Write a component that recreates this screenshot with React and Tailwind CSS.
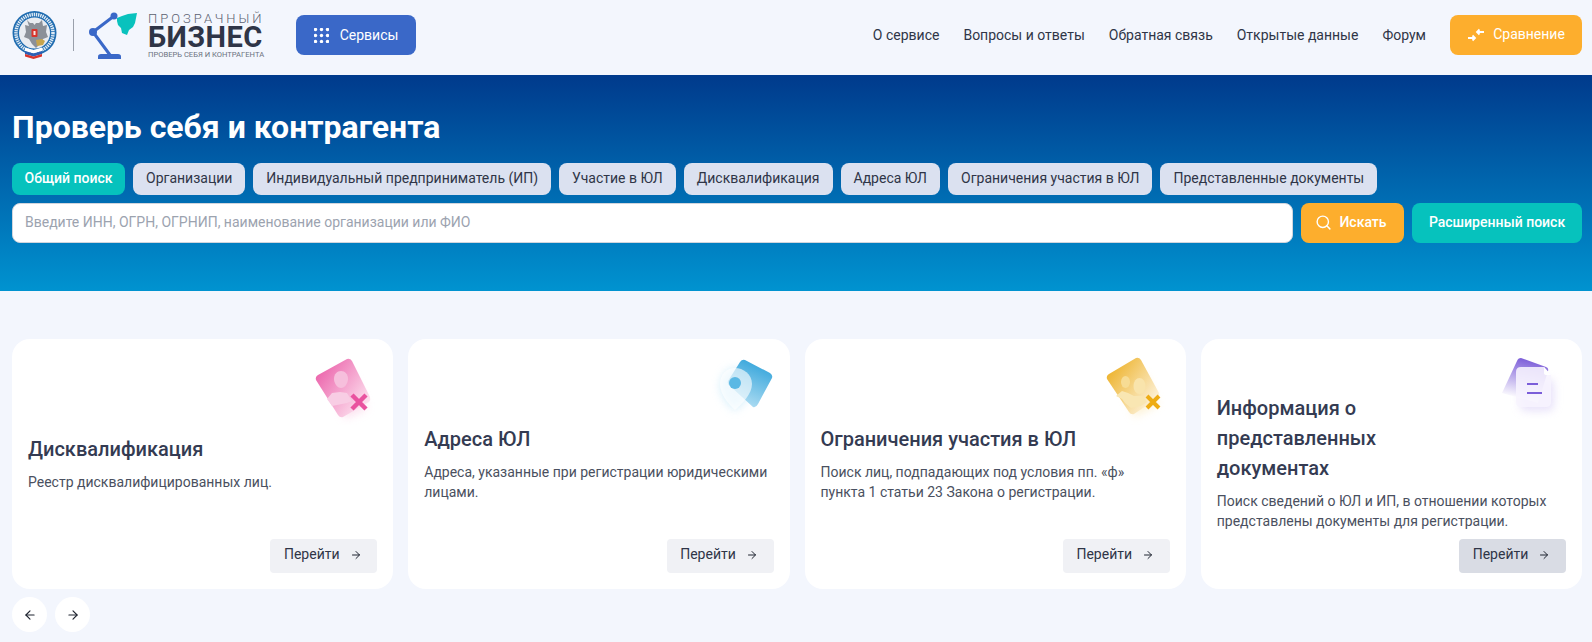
import React from "react";
import { ArrowLeft, ArrowRight, Search } from "lucide-react";

const tabs = [
  ["Общий поиск", true],
  ["Организации"],
  ["Индивидуальный предприниматель (ИП)"],
  ["Участие в ЮЛ"],
  ["Дисквалификация"],
  ["Адреса ЮЛ"],
  ["Ограничения участия в ЮЛ"],
  ["Представленные документы"],
];

function Emblem() {
  return (
    <svg width="46" height="50" viewBox="0 0 46 50">
      <circle cx="22.5" cy="23" r="22" fill="#1f6cb0" />
      <circle cx="22.5" cy="23" r="18.5" fill="none" stroke="#dfeaf4" strokeWidth="3.5" strokeDasharray="1.4 0.8" />
      <circle cx="22.5" cy="23" r="15.5" fill="#e9ecf1" />
      <path d="M15 10l3 3 3 0 1.500 2 1.500-2 3 0 3-3 1 6 4-1-1 7 2 5-5 2-3 5-4 4-4-4-3-5-5-2 2-5-1-7 4 1z" fill="#8b9098" />
      <rect x="19.500" y="19" width="6" height="8" rx="1" fill="#d8342c" />
      <path d="M21.500 21h2v4h-2z" fill="#f6e6e4" />
      <path d="M24 30l6-1 3 2-2 4-6 1z" fill="#c6a44c" />
      <path d="M13 37.500l8.500 2.500 8.500-2.500v3.500l-8.500 2.500-8.500-2.500z" fill="#fff" />
      <path d="M13 41l8.500 2.500 8.500-2.500v3l-8.500 2.500-8.500-2.500z" fill="#2d5fb4" />
      <path d="M13 44l8.500 2.500 8.500-2.500v2.500l-8.500 2.500-8.500-2.500z" fill="#d8342c" />
    </svg>
  );
}

function Lamp() {
  return (
    <svg width="50" height="50" viewBox="0 0 50 50">
      <path d="M9 49v-2.500q0-2.500 3-2.500h17q3 0 3 2.500v2.500z" fill="#3a68c8" />
      <path d="M4 22L21 45M4 22L25 6" stroke="#3a68c8" strokeWidth="3" fill="none" />
      <circle cx="4" cy="22" r="4" fill="#3a68c8" />
      <circle cx="25" cy="6" r="3.500" fill="#3a68c8" />
      <path d="M28 8l5-2 6-2 9-1-2 10-2 4-4 3-2 5-5-2-1-5-3-3-1-4z" fill="#09c2bd" />
    </svg>
  );
}

function Glow({ id }) {
  return (
    <filter id={id} x="-50%" y="-50%" width="200%" height="200%">
      <feGaussianBlur stdDeviation="4" />
    </filter>
  );
}

function PinkIcon() {
  return (
    <svg width="66" height="72" viewBox="0 0 66 72">
      <defs>
        <linearGradient id="p1" x1="0" y1="0.1" x2="1" y2="0.9">
          <stop offset="0" stopColor="#ea5aa6" />
          <stop offset="1" stopColor="#fff0f7" />
        </linearGradient>
        <Glow id="p2" />
      </defs>
      <path d="M20 30L42 22 56 56 34 66z" fill="#f9c6e0" opacity="0.5" filter="url(#p2)" />
      <path d="M7 22L36 6q3-1 5 2l18 36q1 3-1 5L32 64q-3 1-5-2L5 27q-1-3 2-5z" fill="url(#p1)" />
      <path d="M23 26c0-5 3-8 7-8s7 3 7 8c0 4-3 9-7 9s-7-5-7-9z" fill="#f6bfdc" />
      <path d="M16 46l5-6 8-1 7 1 3 5 2 3-5 2-15 3z" fill="#f8cde4" />
      <path d="M41 42l14 14M55 42L41 56" stroke="#e9529f" strokeWidth="4.500" />
    </svg>
  );
}

function BlueIcon() {
  return (
    <svg width="66" height="66" viewBox="0 0 66 66">
      <defs>
        <linearGradient id="b1" x1="0.7" y1="0" x2="0.3" y2="1">
          <stop offset="0" stopColor="#31a3da" />
          <stop offset="1" stopColor="#b6e0f4" />
        </linearGradient>
        <Glow id="b2" />
      </defs>
      <path d="M12 34c0-11 7-19 15-19s17 8 17 19c0 9-10 18-17 24-7-6-15-15-15-24z" fill="#bfe6f8" opacity="0.6" filter="url(#b2)" />
      <path d="M32 9q2-3 5-2l25 13q3 2 2 5L50 51q-2 4-5 3L22 33q-3-2-2-5z" fill="url(#b1)" />
      <path d="M12 31c0-10 7-16 15-16s17 6 17 16c0 10-10 20-17 26-7-6-15-16-15-26z" fill="#fff" opacity="0.62" />
      <circle cx="27" cy="30" r="6" fill="#5ab8e4" />
    </svg>
  );
}

function YellowIcon() {
  return (
    <svg width="66" height="72" viewBox="0 0 66 72">
      <defs>
        <linearGradient id="y1" x1="0" y1="0.1" x2="1" y2="0.9">
          <stop offset="0" stopColor="#ecad1c" />
          <stop offset="1" stopColor="#fffaf0" />
        </linearGradient>
        <Glow id="y2" />
      </defs>
      <path d="M18 30L42 22 54 52 30 64z" fill="#fbe6ae" opacity="0.5" filter="url(#y2)" />
      <path d="M5 21L32 5q3-1 5 2l18 33q1 3-1 5L30 61q-3 1-5-2L3 26q-1-3 2-5z" fill="url(#y1)" />
      <ellipse cx="21.500" cy="29" rx="4.500" ry="6" fill="#f7dc94" />
      <ellipse cx="35.500" cy="33" rx="6" ry="8" fill="#f9e4ac" />
      <path d="M12 43l6-5 6 2 6 3 8 0 5 6-6 4-10 2-6-5-3-4z" fill="#f9e6b2" />
      <path d="M43 43l12 12M55 43L43 55" stroke="#eeac14" strokeWidth="4" />
    </svg>
  );
}

function PurpleIcon() {
  return (
    <svg width="66" height="66" viewBox="0 0 66 66">
      <defs>
        <linearGradient id="v1" x1="0.5" y1="0" x2="0.3" y2="1">
          <stop offset="0" stopColor="#7a5bd8" />
          <stop offset="0.9" stopColor="#ffffff" />
        </linearGradient>
        <Glow id="v2" />
      </defs>
      <rect x="20" y="26" width="34" height="32" rx="6" fill="#d9cff6" opacity="0.6" filter="url(#v2)" />
      <path d="M17 8q1-3 4-3l25 9q3 1 2 4L38 50 2 40z" fill="url(#v1)" />
      <path d="M16 19q0-5 5-5h23l7 8v27q0 5-5 5H21q-5 0-5-5z" fill="#f7f4fe" opacity="0.88" />
      <path d="M44 14l7 8h-5q-2 0-2-2z" fill="#fff" />
      <path d="M27 31h11M27 40h15" stroke="#7b5ed9" strokeWidth="1.800" />
    </svg>
  );
}

function GoButton({ hover }) {
  return (
    <button className={`flex h-[34px] w-[107px] items-center justify-center gap-[10px] rounded-[4px] pb-[3px] pr-[2px] text-[14px] text-[#2f3547] ${hover ? "bg-[#d9dce4]" : "bg-[#f0f1f5]"}`}>
      Перейти
      <ArrowRight size={12} strokeWidth={2} className="text-[#1f2430]" />
    </button>
  );
}

function Card({ icon, title, text, shift, hover }) {
  return (
    <div className="relative flex h-[250px] w-[381.25px] shrink-0 flex-col justify-center rounded-[18px] bg-white px-4 pb-[15px]">
      <div className="absolute right-[16px] top-[14px]">{icon}</div>
      <div className={shift}>
        <h3 className="text-[20px] leading-[30px] font-medium text-[#343b52]">{title}</h3>
        <p className="mt-2 text-[14px] leading-[20px] text-[#4a5060]">{text}</p>
      </div>
      <div className="absolute bottom-[16px] right-[16px]"><GoButton hover={hover} /></div>
    </div>
  );
}

export default function App() {
  return (
    <div className="min-h-[642px] bg-[#f3f6fd] font-['Roboto',sans-serif]">
      <header className="flex h-[75px] items-center justify-between pb-[5px] pl-[12px] pr-[10px]">
        <div className="flex items-center">
          <Emblem />
          <div className="ml-[15px] h-[32px] w-px bg-[#9aa0ab]" />
          <div className="ml-[15px]"><Lamp /></div>
          <div className="ml-[9px] flex w-[115px] flex-col pt-[2px] text-[#2f3547]">
            <span className="whitespace-nowrap text-[13px] leading-[13px] font-light tracking-[3px] text-[#5b6170]">ПРОЗРАЧНЫЙ</span>
            <span className="text-[29px] leading-[24px] font-bold tracking-[0.4px]">БИЗНЕС</span>
            <span className="whitespace-nowrap text-[7.6px] leading-[11px] text-[#6b7280]">ПРОВЕРЬ СЕБЯ И КОНТРАГЕНТА</span>
          </div>
          <button className="ml-[33px] flex h-[40px] w-[120px] items-center justify-center gap-[11px] rounded-[8px] bg-[#3a68c8] text-[14px] text-white">
            <svg width="15" height="15" viewBox="0 0 15 15" fill="#fff">
              {[1.5, 7.5, 13.5].flatMap((y) => [1.5, 7.5, 13.5].map((x) => <circle key={`${x}-${y}`} cx={x} cy={y} r="1.7" />))}
            </svg>
            Сервисы
          </button>
        </div>
        <nav className="flex items-center text-[14px] text-[#2f3547]">
          <a className="mr-6">О сервисе</a>
          <a className="mr-6">Вопросы и ответы</a>
          <a className="mr-6">Обратная связь</a>
          <a className="mr-6">Открытые данные</a>
          <a className="mr-6">Форум</a>
          <button className="flex h-[40px] w-[132px] items-center justify-center gap-2 rounded-[8px] bg-[#fdae2d] pb-[1px] text-[14px] text-white">
            <svg width="18" height="14" viewBox="0 0 18 14" fill="none" stroke="#fff" strokeWidth="1.8">
              <path d="M17 4H10M12.500 1.500L10 4l2.500 2.500M1 10h7M5.500 7.500L8 10l-2.500 2.500" />
            </svg>
            Сравнение
          </button>
        </nav>
      </header>

      <section className="h-[216px] bg-gradient-to-b from-[#003a8c] to-[#0093d0] pl-[12px] pr-[10px] pt-[33px]">
        <h1 className="text-[32px] leading-[38px] font-bold text-white">Проверь себя и контрагента</h1>
        <div className="mt-[17px] flex gap-[8px]">
          {tabs.map(([t, active]) => (
            <button key={t} className={`h-[32px] rounded-[8px] pb-[2px] text-[14px] whitespace-nowrap ${active ? "bg-[#06c2bd] px-[12.5px] font-medium text-white" : "bg-[#dbe1f0] px-[13px] text-[#2f3547]"}`}>
              {t}
            </button>
          ))}
        </div>
        <div className="mt-[8px] flex gap-[8px]">
          <div className="flex h-[40px] w-[1281px] items-center rounded-[8px] border border-[#d0d5dd] bg-white px-3 pb-[2px] text-[14px] text-[#9ca3af]">
            Введите ИНН, ОГРН, ОГРНИП, наименование организации или ФИО
          </div>
          <button className="flex h-[40px] w-[103px] items-center justify-center gap-[7px] rounded-[8px] bg-[#fdae2d] pb-[2px] pr-[3px] text-[14px] font-medium text-white">
            <Search size={17} strokeWidth={2} />
            Искать
          </button>
          <button className="h-[40px] w-[170px] rounded-[8px] bg-[#06c2bd] pb-[2px] text-[14px] font-medium text-white">Расширенный поиск</button>
        </div>
      </section>

      <section className="flex gap-[15px] overflow-hidden pl-[12px] pr-[10px] pt-[48px]">
        <Card icon={<PinkIcon />} title="Дисквалификация" text="Реестр дисквалифицированных лиц." shift="mt-[12px]" />
        <Card icon={<BlueIcon />} title="Адреса ЮЛ" text="Адреса, указанные при регистрации юридическими лицами." shift="mt-[12px]" />
        <Card icon={<YellowIcon />} title="Ограничения участия в ЮЛ" text="Поиск лиц, подпадающих под условия пп. «ф» пункта 1 статьи 23 Закона о регистрации." shift="mt-[12px]" />
        <Card icon={<PurpleIcon />} title={<span className="block w-[220px]">Информация о представленных документах</span>} text="Поиск сведений о ЮЛ и ИП, в отношении которых представлены документы для регистрации." shift="mt-[10px]" hover />
      </section>

      <div className="mt-[8px] flex gap-[8px] pl-[12px]">
        <button className="flex size-[35px] items-center justify-center rounded-full bg-white text-[#1f2430]"><ArrowLeft size={14} strokeWidth={2} /></button>
        <button className="flex size-[35px] items-center justify-center rounded-full bg-white text-[#1f2430]"><ArrowRight size={14} strokeWidth={2} /></button>
      </div>
    </div>
  );
}
